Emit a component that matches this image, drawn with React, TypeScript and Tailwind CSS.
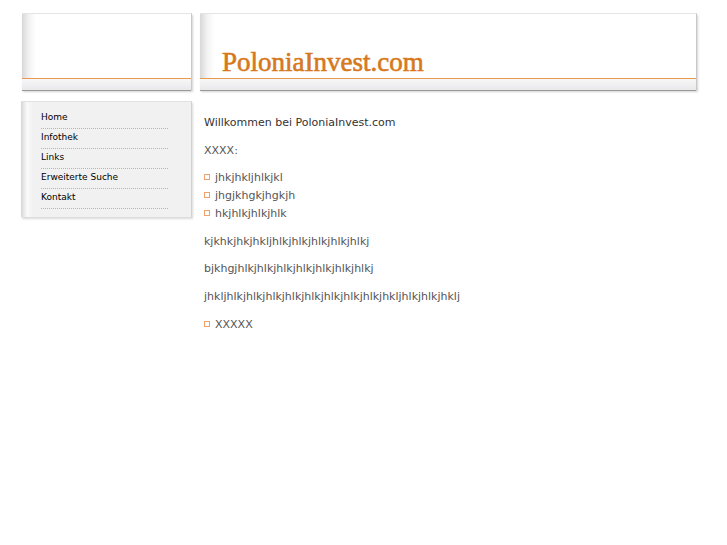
import React from "react";

function HeaderBox({ className, children }: { className?: string; children?: React.ReactNode }) {
  return (
    <div className={"relative h-[77px] bg-white border-t border-t-[#e4e4e4] border-r border-r-[#c8c8c8] shadow-[1px_2px_2px_rgba(0,0,0,0.18)] " + (className ?? "")}>
      <div className="absolute left-0 top-0 bottom-0 w-[14px] bg-gradient-to-r from-[#d8d8d8] via-[#f2f2f2] to-white" />
      <div className="relative h-[64px] flex items-end">{children}</div>
      <div className="relative h-px bg-[#e99a52]" />
      <div className="relative h-[12px] bg-gradient-to-b from-[#f7f7f7] to-[#e9e9ec] border-b border-b-[#9a9a9a]" />
    </div>
  );
}

const menu = ["Home", "Infothek", "Links", "Erweiterte Suche", "Kontakt"];

function Bullet() {
  return <span className="inline-block w-[6px] h-[6px] border border-[#f0a26a] mr-[5px] mb-[1px]" />;
}

export default function App() {
  return (
    <div className="min-h-[545px] bg-white pt-[13px] pl-[22px]" style={{ fontFamily: "'DejaVu Sans', Verdana, sans-serif" }}>
      <div className="flex gap-[8px]">
        <HeaderBox className="w-[170px]" />
        <HeaderBox className="w-[497px]">
          <span
            className="ml-[22px] mb-[2px] text-[27px] leading-none text-[#d6781c] [-webkit-text-stroke:0.6px_#d6781c]"
            style={{ fontFamily: "'Liberation Serif', 'Times New Roman', serif" }}
          >
            PoloniaInvest.com
          </span>
        </HeaderBox>
      </div>
      <div className="flex mt-[11px]">
        <div className="-ml-px w-[171px] h-[116px] relative bg-[#f1f1f1] border-t border-t-[#e2e2e2] border-r border-r-[#d0d0d0] shadow-[1px_2px_2px_rgba(0,0,0,0.15)] pt-[7px]">
          <div className="absolute left-0 top-0 bottom-0 w-[12px] bg-gradient-to-r from-[#d6d6d6] via-[#fafafa] to-[#f1f1f1]" />
          <div className="relative pl-[20px] pr-[23px]">
            {menu.map((m) => (
              <div key={m} className="h-[20px] border-b border-dotted border-b-[#b5b5b5] text-[9px] leading-[17px] text-[#000]">
                {m}
              </div>
            ))}
          </div>
        </div>
        <div className="ml-[12px] pt-[13px] text-[11px] leading-[18px] text-[#555]">
          <p className="mb-[9.5px] text-[#333]">Willkommen bei PoloniaInvest.com</p>
          <p className="mb-[9.5px]">XXXX:</p>
          <ul className="mb-[9.5px]">
            <li><Bullet />jhkjhkljhlkjkl</li>
            <li><Bullet />jhgjkhgkjhgkjh</li>
            <li><Bullet />hkjhlkjhlkjhlk</li>
          </ul>
          <p className="mb-[9.5px]">kjkhkjhkjhkljhlkjhlkjhlkjhlkjhlkj</p>
          <p className="mb-[9.5px]">bjkhgjhlkjhlkjhlkjhlkjhlkjhlkjhlkj</p>
          <p className="mb-[10px]">jhkljhlkjhlkjhlkjhlkjhlkjhlkjhlkjhlkjhkljhlkjhlkjhklj</p>
          <ul>
            <li><Bullet />XXXXX</li>
          </ul>
        </div>
      </div>
    </div>
  );
}
